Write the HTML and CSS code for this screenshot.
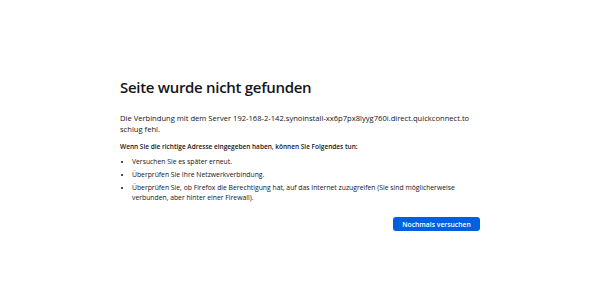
FILE: index.html
```html
<!DOCTYPE html>
<html lang="de">
<head>
  <meta charset="UTF-8">
  <title>Seite wurde nicht gefunden</title>
  <link rel="stylesheet" href="styles.css">
</head>
<body>
  <div class="container">
    <h1>Seite wurde nicht gefunden</h1>
    <p class="desc">Die Verbindung mit dem Server 192-168-2-142.synoinstall-xx6p7px8lyyg760i.direct.quickconnect.to schlug fehl.</p>
    <p class="hint">Wenn Sie die richtige Adresse eingegeben haben, können Sie Folgendes tun:</p>
    <ul class="tips">
      <li>Versuchen Sie es später erneut.</li>
      <li>Überprüfen Sie Ihre Netzwerkverbindung.</li>
      <li>Überprüfen Sie, ob Firefox die Berechtigung hat, auf das Internet zuzugreifen (Sie sind möglicherweise verbunden, aber hinter einer Firewall).</li>
    </ul>
    <div class="actions">
      <button class="retry">Nochmals versuchen</button>
    </div>
  </div>
</body>
</html>
```

FILE: styles.css
```css
body {
  margin: 0;
  background: #fff;
  font-family: 'Open Sans', sans-serif;
  color: #15141a;
}

.container {
  width: 360px;
  margin: 0 auto;
  padding-top: 76px;
}

h1 {
  font-size: 15px;
  font-weight: 600;
  letter-spacing: -0.3px;
  line-height: 22px;
  margin: 0 0 15px;
}

.desc {
  font-size: 7.6px;
  line-height: 10.5px;
  margin: 0 0 8px;
}

.hint {
  font-size: 6.5px;
  font-weight: 600;
  margin: 0 0 6px;
}

.tips {
  font-size: 6.8px;
  line-height: 10px;
  margin: 0;
  padding-left: 12px;
}

.tips li {
  margin-bottom: 3px;
}

.tips li:first-child {
  margin-top: 1px;
}

.actions {
  display: flex;
  justify-content: flex-end;
  margin-top: 14px;
}

.retry {
  font-family: inherit;
  font-size: 6.8px;
  font-weight: 600;
  color: #fff;
  background-color: #0061e0;
  border: none;
  border-radius: 3px;
  padding: 0;
  width: 87px;
  height: 14px;
  cursor: pointer;
}
```
